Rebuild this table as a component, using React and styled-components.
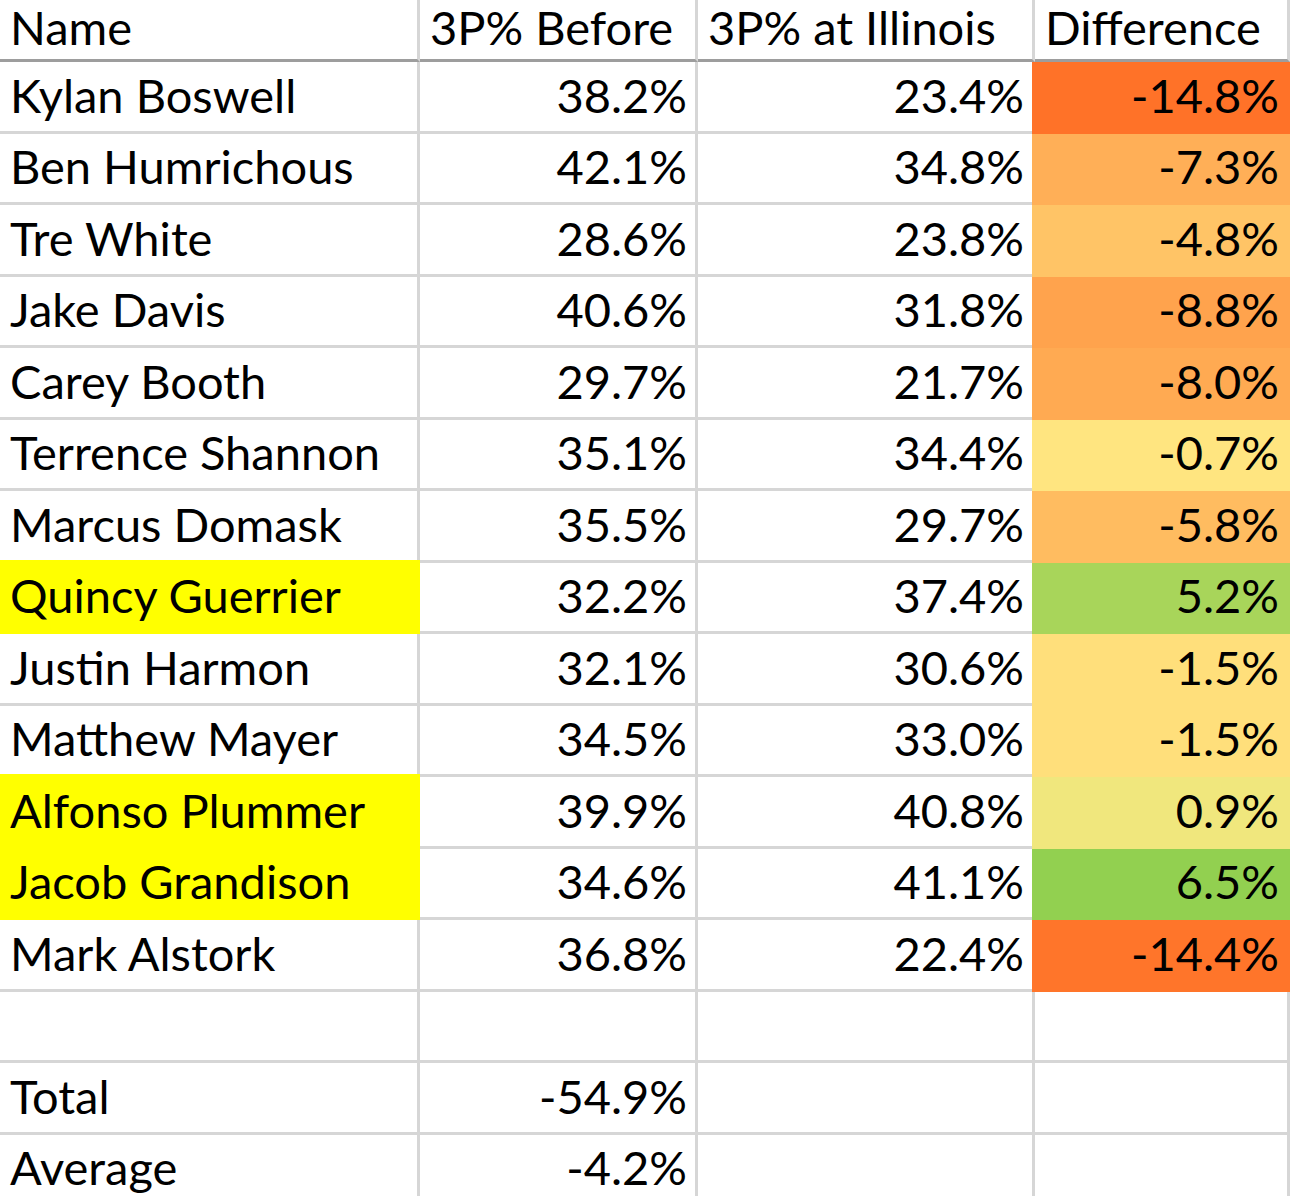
import React from "react";
import styled, { createGlobalStyle, css } from "styled-components";

const GlobalStyle = createGlobalStyle`
  html, body {
    margin: 0;
    padding: 0;
    background: #ffffff;
    overflow: hidden;
  }
  body {
    font-family: "Lato", "Liberation Sans", sans-serif;
    color: #000000;
  }
`;

const GRID = "#d6d6d6";
const HEAD_LINE = "#9d9d9d";

const Sheet = styled.div`
  display: flex;
  flex-direction: column;
  width: 1290px;
`;

const Row = styled.div`
  display: grid;
  grid-template-columns: 420px 278px 337px 255px;
  height: ${(p) => (p.$header ? "62px" : "71.5px")};
`;

const Cell = styled.div`
  box-sizing: border-box;
  display: flex;
  align-items: flex-end;
  justify-content: ${(p) => (p.$right ? "flex-end" : "flex-start")};
  padding: ${(p) => (p.$header ? "0 9px 8px 10px" : "0 8px 12px 10px")};
  font-size: 47px;
  line-height: 1;
  white-space: nowrap;
  overflow: visible;
  border-right: 3px solid ${GRID};
  border-bottom: 3px solid ${(p) => (p.$header ? HEAD_LINE : GRID)};
  background: #ffffff;
  ${(p) =>
    p.$fill &&
    css`
      background: ${p.$fill};
      border-right-color: ${p.$fill};
      border-bottom-color: ${p.$fill};
    `}
  ${(p) =>
    p.$fill &&
    p.$coverLeft &&
    css`
      box-shadow: -3px 0 0 ${p.$fill};
    `}
  ${(p) =>
    p.$fill &&
    p.$coverTop &&
    css`
      box-shadow: 0 -3px 0 ${p.$fill};
    `}
`;

const HIGHLIGHT = "#ffff00";

const players = [
  ["Kylan Boswell", 38.2, 23.4, -14.8],
  ["Ben Humrichous", 42.1, 34.8, -7.3],
  ["Tre White", 28.6, 23.8, -4.8],
  ["Jake Davis", 40.6, 31.8, -8.8],
  ["Carey Booth", 29.7, 21.7, -8.0],
  ["Terrence Shannon", 35.1, 34.4, -0.7],
  ["Marcus Domask", 35.5, 29.7, -5.8],
  ["Quincy Guerrier", 32.2, 37.4, 5.2, true],
  ["Justin Harmon", 32.1, 30.6, -1.5],
  ["Matthew Mayer", 34.5, 33.0, -1.5],
  ["Alfonso Plummer", 39.9, 40.8, 0.9, true],
  ["Jacob Grandison", 34.6, 41.1, 6.5, true],
  ["Mark Alstork", 36.8, 22.4, -14.4],
];

const MIN_C = [255, 114, 40];
const MID_C = [255, 235, 132];
const MAX_C = [146, 208, 80];

const diffs = players.map((p) => p[3]);
const minV = Math.min(...diffs);
const maxV = Math.max(...diffs);

function mix(a, b, t) {
  return a.map((v, i) => Math.round(v + (b[i] - v) * t));
}

function scaleColor(v) {
  const c =
    v <= 0 ? mix(MID_C, MIN_C, v / minV) : mix(MID_C, MAX_C, v / maxV);
  return `rgb(${c[0]}, ${c[1]}, ${c[2]})`;
}

const pct = (v) => `${v.toFixed(1)}%`;

export default function App() {
  return (
    <>
      <GlobalStyle />
      <Sheet>
        <Row $header>
          <Cell $header>Name</Cell>
          <Cell $header>3P% Before</Cell>
          <Cell $header>3P% at Illinois</Cell>
          <Cell $header>Difference</Cell>
        </Row>
        {players.map(([name, before, at, diff, hl]) => (
          <Row key={name}>
            <Cell $fill={hl ? HIGHLIGHT : undefined} $coverTop>
              {name}
            </Cell>
            <Cell $right>{pct(before)}</Cell>
            <Cell $right>{pct(at)}</Cell>
            <Cell $right $fill={scaleColor(diff)} $coverLeft>
              {pct(diff)}
            </Cell>
          </Row>
        ))}
        <Row>
          <Cell />
          <Cell />
          <Cell />
          <Cell />
        </Row>
        <Row>
          <Cell>Total</Cell>
          <Cell $right>-54.9%</Cell>
          <Cell />
          <Cell />
        </Row>
        <Row>
          <Cell>Average</Cell>
          <Cell $right>-4.2%</Cell>
          <Cell />
          <Cell />
        </Row>
      </Sheet>
    </>
  );
}
